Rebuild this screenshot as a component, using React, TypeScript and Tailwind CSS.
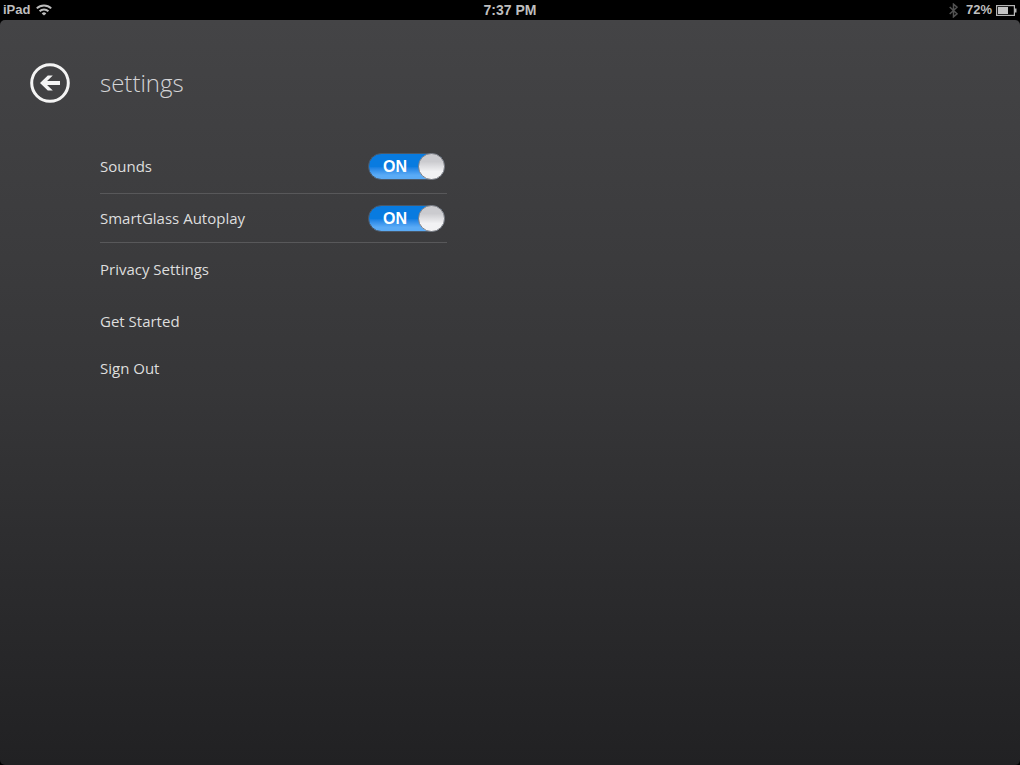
import { useState } from "react";
import clsx from "clsx";

type SwitchRowProps = {
  id: string;
  label: string;
  className?: string;
};

const SwitchRow = ({ id, label, className }: SwitchRowProps) => {
  const [on, setOn] = useState(true);

  return (
    <li className={clsx("flex items-center justify-between border-b border-[#58585a] pr-0.5", className)}>
      <label htmlFor={id}>{label}</label>
      <span className="relative flex">
        <input
          id={id}
          type="checkbox"
          role="switch"
          checked={on}
          onChange={(e) => setOn(e.target.checked)}
          className="h-[27px] w-[77px] cursor-pointer appearance-none rounded-full border border-[#4a5868] bg-gray-500 checked:bg-linear-to-b checked:from-[#087be0] checked:from-50% checked:to-[#5aabf6] checked:to-85%"
        />
        <span
          className={clsx(
            "pointer-events-none absolute inset-y-0 flex items-center pt-0.5 font-['Liberation_Sans',sans-serif] text-base font-bold text-white",
            on ? "left-[15px]" : "right-3"
          )}
        >
          {on ? "ON" : "OFF"}
        </span>
        <span
          className={clsx(
            "pointer-events-none absolute inset-y-0 w-[27px] rounded-full border border-[#85858a] bg-linear-to-b from-[#cbcbcf] from-30% to-[#f2f2f4] to-70%",
            on ? "right-0" : "left-0"
          )}
        />
      </span>
    </li>
  );
};

const StatusBar = () => (
  <header className="grid h-5 grid-cols-3 items-center bg-black px-[3px] font-['Liberation_Sans',sans-serif] text-[13px] font-bold text-[#bebebe]">
    <div className="flex items-center gap-1.5">
      <span>iPad</span>
      <svg className="h-3 w-4" viewBox="0 0 16 12" fill="none" stroke="currentColor" strokeWidth="2" aria-label="Wi-Fi">
        <path d="M.8 4.4a10.2 10.2 0 0 1 14.4 0" />
        <path d="M3.6 7.3a6.2 6.2 0 0 1 8.8 0" />
        <path d="M8 11.6 5.7 9.4a3.2 3.2 0 0 1 4.6 0Z" fill="currentColor" stroke="none" />
      </svg>
    </div>
    <time className="text-center text-sm">7:37 PM</time>
    <div className="flex items-center justify-end gap-1">
      <svg className="mr-1 h-[15px] w-[9px] text-[#535353]" viewBox="0 0 9 15" fill="none" stroke="currentColor" strokeWidth="1.5" aria-label="Bluetooth">
        <path d="M.7 4 8 10.8 4.5 13.8V1.2L8 4.2.7 11" />
      </svg>
      <span>72%</span>
      <svg className="h-[11px] w-[21px]" viewBox="0 0 21 11" aria-label="Battery">
        <rect x=".6" y=".6" width="17.8" height="9.8" fill="none" stroke="#b4b4b4" strokeWidth="1.2" />
        <rect x="2" y="2" width="10" height="7" fill="#c4c4c4" />
        <path d="M19 3.5h1.5v4H19z" fill="#b4b4b4" />
      </svg>
    </div>
  </header>
);

const App = () => {
  return (
    <div className="flex min-h-screen flex-col bg-black">
      <StatusBar />
      <main className="flex-1 rounded-[5px] bg-linear-to-b from-[#444446] via-[#363638] to-[#212123] font-['Open_Sans','Noto_Sans',sans-serif] text-[#dedede]">
        <div className="flex items-center gap-[30px] px-[30px] pt-[43px]">
          <button type="button" aria-label="Back" className="size-10 cursor-pointer">
            <svg viewBox="0 0 40 40" fill="none" stroke="#f4f4f4">
              <circle cx="20" cy="20" r="18.3" strokeWidth="3" />
              <path d="M30 20H13" strokeWidth="4" />
              <path d="M17.8 12.5h5L15 20l7.8 7.5h-5L10 20Z" fill="#f4f4f4" stroke="none" />
            </svg>
          </button>
          <h1 className="text-2xl font-light text-[#d4d4d6]">settings</h1>
        </div>
        <ul className="mt-9 ml-[100px] max-w-[347px] text-[15px]">
          <SwitchRow id="sounds" label="Sounds" className="h-[55px]" />
          <SwitchRow id="autoplay" label="SmartGlass Autoplay" className="h-[49px]" />
          <li className="flex h-[52px] items-center">
            <a href="#privacy">Privacy Settings</a>
          </li>
          <li className="flex h-[52px] items-center">
            <a href="#get-started">Get Started</a>
          </li>
          <li className="flex h-[42px] items-center">
            <a href="#sign-out">Sign Out</a>
          </li>
        </ul>
      </main>
    </div>
  );
};

export default App;
